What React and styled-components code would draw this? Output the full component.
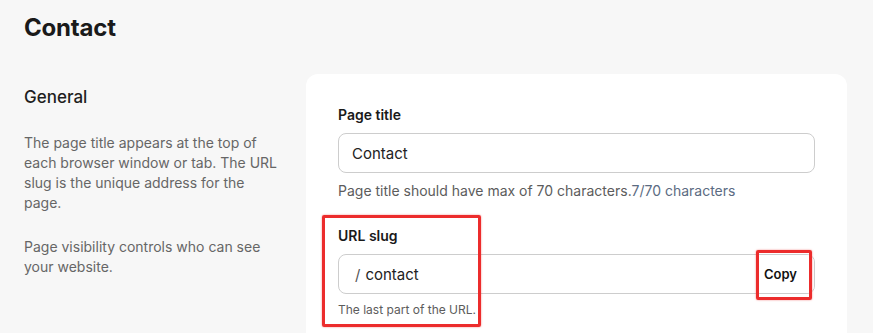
import React from "react";
import styled, { createGlobalStyle } from "styled-components";

const Global = createGlobalStyle`
  html, body { margin: 0; padding: 0; background: #f7f7f7; }
  body { font-family: Inter, "Noto Sans", Arial, sans-serif; color: #1c1c1c; -webkit-font-smoothing: antialiased; }
  * { box-sizing: border-box; }
`;

const Page = styled.div`
  padding: 12px 26px 0 24px;
  height: 333px;
  overflow: hidden;
`;

const Title = styled.h1`
  margin: 0;
  font-size: 24px;
  line-height: 32px;
  font-weight: 700;
  letter-spacing: -0.2px;
  color: #1a1a1a;
`;

const Layout = styled.div`
  display: grid;
  grid-template-columns: 258px 1fr;
  column-gap: 24px;
  margin-top: 30px;
`;

const Aside = styled.div`
  padding-top: 11px;
`;

const SectionTitle = styled.h2`
  margin: 0 0 24px;
  font-size: 17px;
  line-height: 24px;
  font-weight: 500;
  color: #1e1e1e;
`;

const Description = styled.p`
  margin: 0 0 24px;
  font-size: 14px;
  line-height: 20px;
  color: #666;
`;

const Card = styled.section`
  position: relative;
  background: #fff;
  border-radius: 12px;
  padding: 31px 32px 40px;
  min-height: 300px;
  display: flex;
  flex-direction: column;
  gap: 25px;
`;

const Field = styled.div`
  display: flex;
  flex-direction: column;
`;

const Label = styled.label`
  font-size: 14px;
  line-height: 20px;
  font-weight: 600;
  color: #1a1a1a;
  margin-bottom: 8px;
`;

const InputBox = styled.div`
  display: flex;
  align-items: center;
  height: 40px;
  border: 1px solid #cdcdcd;
  border-radius: 8px;
  padding-left: ${(p) => p.$pad || 13}px;
  font-size: 15px;
  color: #222;
  overflow: hidden;
`;

const Prefix = styled.span`
  color: #555;
  margin-right: 5px;
`;

const Value = styled.span`
  flex: 1;
`;

const CopyButton = styled.button`
  height: 100%;
  border: none;
  background: #fff;
  padding: 0 17px 0 18px;
  font-family: inherit;
  font-size: 13px;
  font-weight: 600;
  color: #111;
`;

const Help = styled.div`
  margin-top: 8px;
  font-size: ${(p) => (p.$small ? 12 : 14)}px;
  line-height: ${(p) => (p.$small ? 16 : 20)}px;
  color: #5c5c5c;
`;

const Counter = styled.span`
  color: #5b6b82;
`;

const Annotation = styled.div`
  position: absolute;
  border: 3px solid #ec2c2c;
  border-radius: 2px;
  box-shadow: 0 0 2px rgba(236, 44, 44, 0.6);
  pointer-events: none;
`;

export default function App() {
  return (
    <>
      <Global />
      <Page>
        <Title>Contact</Title>
        <Layout>
          <Aside>
            <SectionTitle>General</SectionTitle>
            <Description>
              The page title appears at the top of each browser window or tab. The URL slug is the unique address for the page.
            </Description>
            <Description>Page visibility controls who can see your website.</Description>
          </Aside>
          <Card>
            <Field>
              <Label>Page title</Label>
              <InputBox>
                <Value>Contact</Value>
              </InputBox>
              <Help>
                Page title should have max of 70 characters.<Counter>7/70 characters</Counter>
              </Help>
            </Field>
            <Field>
              <Label>URL slug</Label>
              <InputBox $pad={16}>
                <Prefix>/</Prefix>
                <Value>contact</Value>
                <CopyButton>Copy</CopyButton>
              </InputBox>
              <Help $small>The last part of the URL.</Help>
            </Field>
            <Annotation style={{ left: 16, top: 141, width: 159, height: 112 }} />
            <Annotation style={{ left: 450, top: 176, width: 56, height: 50 }} />
          </Card>
        </Layout>
      </Page>
    </>
  );
}
